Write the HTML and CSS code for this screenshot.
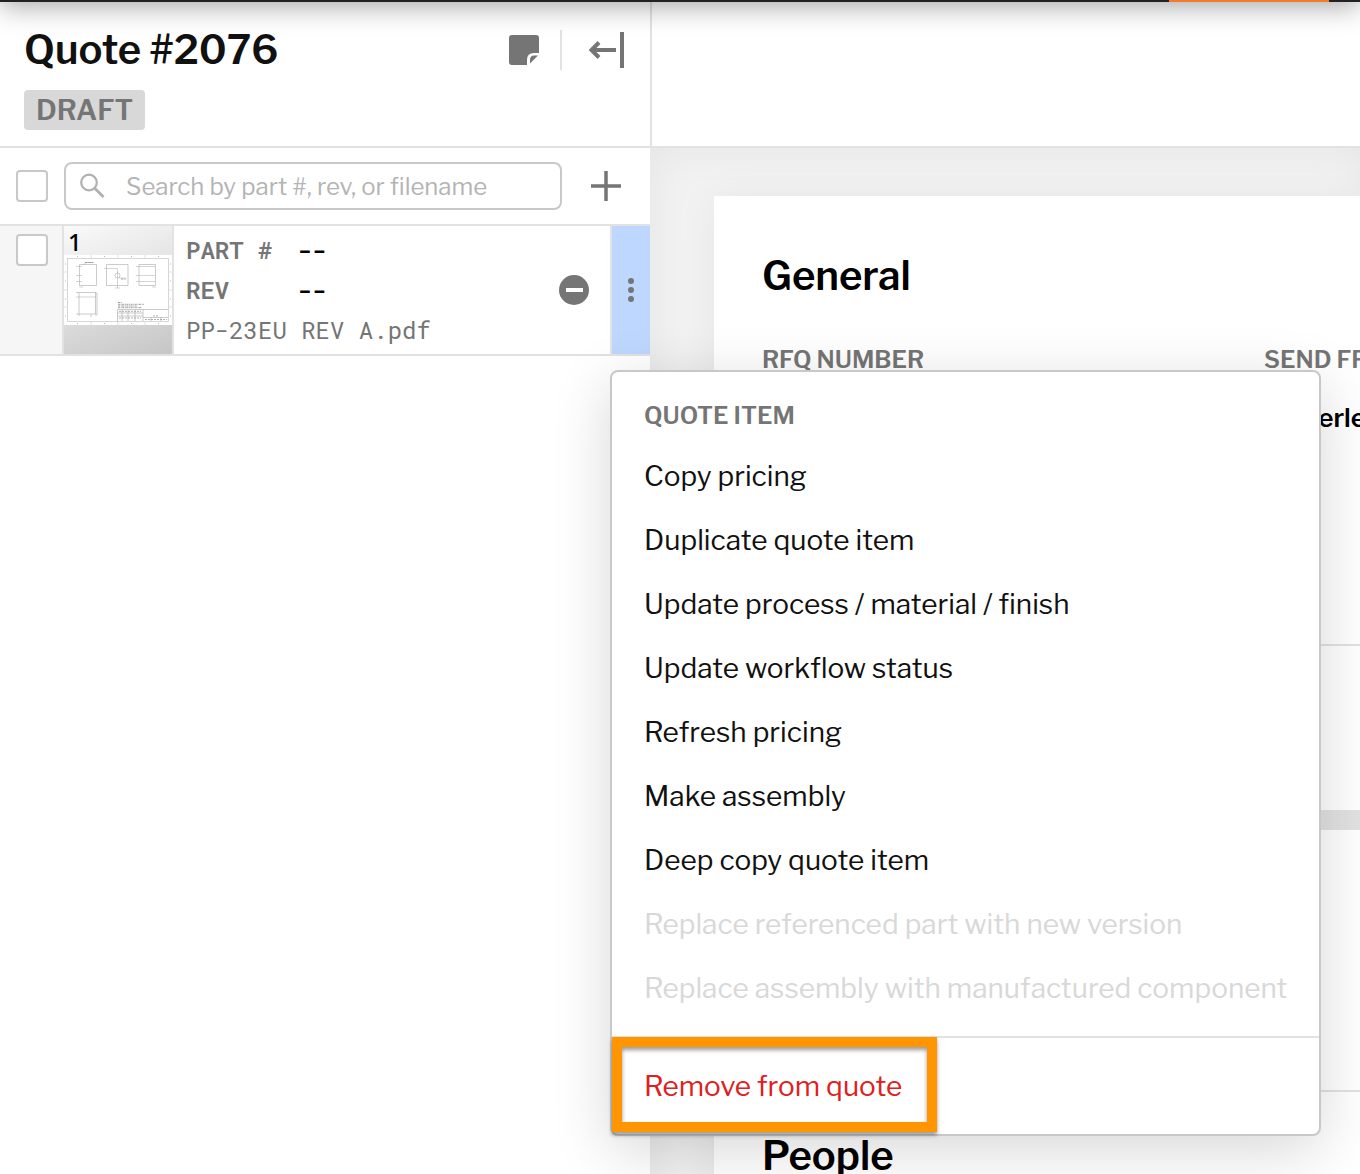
FILE: index.html
```html
<!DOCTYPE html>
<html lang="en">
<head>
<meta charset="utf-8">
<title>Quote #2076</title>
<link rel="stylesheet" href="styles.css">
</head>
<body>
<nav class="topbar"><span class="topbar-active"></span></nav>
<div class="app">
  <aside class="sidebar">
    <header class="quote-header">
      <div class="title-row">
        <h1>Quote #2076</h1>
        <button class="icon-btn" aria-label="Notes">
          <svg width="30" height="30" viewBox="0 0 30 30"><path fill="#757575" d="M3 0H27Q30 0 30 3V18H25Q18 18 18 25V30H3Q0 30 0 27V3Q0 0 3 0Z"/><path fill="#757575" d="M29 20.500L21 28.500V25Q21 20.500 25 20.500Z"/></svg>
        </button>
        <span class="separator"></span>
        <button class="icon-btn" aria-label="Collapse panel">
          <svg width="36" height="36" viewBox="0 0 36 36" fill="none" stroke="#757575" stroke-width="4"><path d="M28 18H4M11 10.500L3.500 18L11 25.500M34 0V36"/></svg>
        </button>
      </div>
      <span class="badge">DRAFT</span>
    </header>
    <div class="search-row">
      <input type="checkbox" class="check" aria-label="Select all items">
      <label class="search">
        <svg width="26" height="26" viewBox="0 0 26 26" fill="none" stroke="#b0b0b0" stroke-width="2.200"><circle cx="9" cy="9.500" r="7.800"/><path stroke-width="2.800" d="M14.500 15L23.500 24"/></svg>
        <input type="text" placeholder="Search by part #, rev, or filename" aria-label="Search items">
      </label>
      <button class="icon-btn" aria-label="Add item">
        <svg width="30" height="30" viewBox="0 0 30 30" stroke="#757575" stroke-width="3.500"><path d="M15 0V30M0 15H30"/></svg>
      </button>
    </div>
    <div class="item">
      <div class="item-select"><input type="checkbox" class="check" aria-label="Select item 1"></div>
      <div class="thumb">
        <span class="thumb-number">1</span>
        <svg class="drawing" viewBox="0 0 108 70" fill="none" stroke="#aaa" stroke-width=".6">
          <rect width="108" height="70" fill="#fff" stroke="none"/>
          <rect x="3.500" y="3.500" width="101" height="63" stroke="#bbb"/>
          <path stroke="#ccc" d="M27 0V3M54 0V3M81 0V3M27 67V70M54 67V70M81 67V70M0 17H3M0 35H3M0 52H3M105 17H108M105 35H108M105 52H108"/>
          <path stroke="#888" stroke-dasharray="1 1" d="M13 1.500h2M40 1.500h2M67 1.500h2M94 1.500h2M13 68.500h2M40 68.500h2M67 68.500h2M94 68.500h2M1 9h1M1 26h1M1 44h1M1 61h1M106 9h1M106 26h1M106 44h1M106 61h1"/>
          <path d="M15.500 9.500H32.500V30.500H15.500ZM42.500 9.500H64V30.500H42.500ZM75 9.500H91.500V30.500H75ZM12 37.500H31.500V59H12M31 38H33V60H31M15 38V61M27 59V62"/>
          <path stroke="#aaa" stroke-width=".5" d="M12 11.500h6M12 20.500h6M12 26.500h6M72 11.500H91M72 20.500H91M72 26.500H91M40 13.500H53.500V33M51 33h5M15 32h4M88 32h4M19 10L22 7.500H30M12 42h20M55 23H62"/>
          <circle cx="53.500" cy="20.500" r="2.500"/>
          <path stroke="#888" stroke-width=".8" stroke-dasharray="2 .7 1 .5" d="M54 47.500h4M54 49.300H80M54 51H73M54 52.700H78M21 7.500h8M57 24h5"/>
          <path stroke="#aaa" d="M53.500 54.500H104M53.500 54.500V66.500M53.500 58H79M53.500 61H79M58 55V66M64 55V66M71 55V66M79 54V66M79 62.500H104M87 62V66M97 62V66"/>
          <path stroke="#999" stroke-width=".8" stroke-dasharray="2 1" d="M55 56.300h22M55 63h22M81 64.500h22M89 61h6"/>
        </svg>
      </div>
      <dl class="item-info">
        <div><dt>PART #</dt><dd>--</dd></div>
        <div><dt>REV</dt><dd>--</dd></div>
        <div class="filename">PP-23EU REV A.pdf</div>
      </dl>
      <button class="icon-btn status" aria-label="No status">
        <svg width="30" height="30" viewBox="0 0 30 30"><circle cx="15" cy="15" r="15" fill="#757575"/><path fill="#fff" d="M7 13H24V17H7Z"/></svg>
      </button>
      <div class="more">
        <button class="more-btn" aria-label="Item actions">
          <svg width="6" height="24" viewBox="0 0 6 24" fill="#757575"><circle cx="3" cy="3" r="3"/><circle cx="3" cy="12" r="3"/><circle cx="3" cy="21" r="3"/></svg>
        </button>
        <div class="menu">
          <div class="menu-group">
            <h3>QUOTE ITEM</h3>
            <button>Copy pricing</button>
            <button>Duplicate quote item</button>
            <button>Update process / material / finish</button>
            <button>Update workflow status</button>
            <button>Refresh pricing</button>
            <button>Make assembly</button>
            <button>Deep copy quote item</button>
            <button disabled>Replace referenced part with new version</button>
            <button disabled>Replace assembly with manufactured component</button>
          </div>
          <div class="menu-group danger">
            <button>Remove from quote</button>
            <span class="highlight"></span>
          </div>
        </div>
      </div>
    </div>
  </aside>
  <main class="main">
    <div class="main-header"></div>
    <div class="canvas">
      <div class="sheet">
        <section class="general">
          <h2>General</h2>
          <div class="fields">
            <div class="field"><h4>RFQ NUMBER</h4></div>
            <div class="field"><h4>SEND FROM</h4><p>Waverley</p></div>
          </div>
        </section>
        <section class="summary"></section>
        <section class="details"></section>
        <section class="people"><h2>People</h2></section>
      </div>
    </div>
  </main>
</div>
</body>
</html>
```
FILE: styles.css
```css
* { box-sizing: border-box; }

body {
  margin: 0;
  min-height: 100vh;
  display: flex;
  flex-direction: column;
  overflow: hidden;
  background: #fff;
  color: #111;
  font-family: "Libre Franklin", Inter, "Liberation Sans", sans-serif;
}

h1, h2, h3, h4, p, dl, dd { margin: 0; }

button {
  border: 0;
  padding: 0;
  background: none;
  color: inherit;
  font: inherit;
  text-align: left;
}

svg { display: block; }

.topbar {
  position: relative;
  z-index: 3;
  height: 2px;
  padding-right: 31px;
  display: flex;
  justify-content: flex-end;
  background: #222;
}
/* shadow of the full-height bar, most of which is scrolled out of view */
.topbar::after {
  content: "";
  position: absolute;
  right: 0;
  bottom: 0;
  left: 0;
  height: 60px;
  box-shadow: 0 4px 28px rgba(0, 0, 0, .36);
  pointer-events: none;
}
.topbar-active { width: 160px; background: #f47a2c; }

.app { flex: 1; display: flex; height: calc(100vh - 2px); }

.sidebar {
  position: relative;
  z-index: 2;
  flex: none;
  width: 650px;
  background: #fff;
}

.quote-header {
  height: 146px;
  padding: 22px 26px 0 24px;
  border-bottom: 2px solid #e2e2e2;
}
.title-row { display: flex; align-items: center; gap: 21px; height: 52px; }
h1 { flex: 1; font-size: 40px; font-weight: 600; line-height: 52px; }
.separator { width: 2px; height: 40px; background: #e2e2e2; }
.title-row .icon-btn:last-child { margin-left: 5px; }
.badge {
  display: inline-block;
  margin-top: 14px;
  padding: 0 12px;
  border-radius: 4px;
  background: #d8d8d8;
  color: #757575;
  font-size: 28px;
  font-weight: 600;
  line-height: 40px;
}

.search-row {
  display: flex;
  align-items: center;
  gap: 16px;
  height: 78px;
  padding: 0 29px 0 16px;
  border-bottom: 2px solid #e2e2e2;
}
.search-row .icon-btn { margin-left: 13px; }
.check {
  appearance: none;
  flex: none;
  width: 32px;
  height: 32px;
  margin: 0;
  border: 2px solid #c8c8c8;
  border-radius: 4px;
  background: #fff;
}
.search {
  flex: 1;
  display: flex;
  align-items: center;
  gap: 20px;
  height: 48px;
  padding: 0 14px;
  border: 2px solid #c8c8c8;
  border-radius: 8px;
}
.search input {
  flex: 1;
  min-width: 0;
  padding: 2px 0 0;
  border: 0;
  outline: 0;
  font: 400 24px/32px "Libre Franklin", Inter, "Liberation Sans", sans-serif;
}
.search input::placeholder { color: #b4b4b4; }

.item { display: flex; height: 130px; border-bottom: 2px solid #e2e2e2; }
.item-select {
  width: 64px;
  padding: 8px 16px;
  border-right: 2px solid #e2e2e2;
  background: #f6f6f6;
}
.thumb {
  width: 110px;
  border-right: 2px solid #e2e2e2;
  background: linear-gradient(160deg, #fafafa, #c6c6c6);
}
.thumb-number {
  display: block;
  height: 29px;
  padding-left: 4px;
  color: #000;
  font: 500 24px/32px "Noto Sans", sans-serif;
}
.drawing { width: 100%; height: 70px; }

.item-info {
  flex: 1;
  padding: 4px 12px;
  color: #757575;
  font: 24px/40px "Roboto Mono", "Liberation Mono", monospace;
}
.item-info div { display: flex; }
.item-info dt { width: 111px; font-weight: 600; }
.item-info dd { color: #000; font-weight: 600; }
.status { align-self: center; margin-right: 21px; }

.more { position: relative; width: 40px; border-left: 2px solid #e2e2e2; }
.more-btn {
  display: flex;
  align-items: center;
  justify-content: center;
  width: 100%;
  height: 100%;
  background: #bdd7ff;
}

.menu {
  position: absolute;
  top: 144px;
  left: -2px;
  width: 711px;
  border: 2px solid #c8c8c8;
  border-radius: 8px;
  background: #fff;
  box-shadow: 0 14px 60px rgba(0, 0, 0, .16);
}
.menu-group { padding: 16px 0; }
.menu h3 {
  height: 56px;
  padding: 0 32px;
  color: #757575;
  font-size: 24px;
  font-weight: 600;
  line-height: 56px;
}
.menu button {
  display: block;
  width: 100%;
  padding: 0 32px;
  font-size: 28px;
  font-weight: 400;
  line-height: 64px;
  white-space: nowrap;
}
.menu button:disabled { color: #d8d8d8; }
.menu .danger { position: relative; border-top: 2px solid #e2e2e2; }
.menu .danger button { color: #e02020; }
.highlight {
  position: absolute;
  top: -1px;
  left: 0;
  width: 325px;
  height: 95px;
  border: 10px solid #ff9500;
  box-shadow: 0 3px 4px rgba(0, 0, 0, .4), inset 0 3px 4px rgba(0, 0, 0, .4);
}

.main { flex: 1; min-width: 0; overflow: hidden; }
.main-header {
  height: 146px;
  border-bottom: 2px solid #e2e2e2;
  border-left: 2px solid #e2e2e2;
}
.canvas {
  padding: 48px 0 0 64px;
  background: #f2f2f2;
  box-shadow: inset 4px 4px 40px rgba(0, 0, 0, .05);
}
.sheet {
  background: #fff;
  color: #000;
  box-shadow: 0 0 40px rgba(0, 0, 0, .05);
}
.sheet h2 { font-size: 40px; font-weight: 600; line-height: 48px; }
.general { height: 450px; padding: 56px 48px; border-bottom: 2px solid #e2e2e2; }
.fields { display: flex; margin-top: 44px; }
.field { flex: none; width: 502px; }
.field h4 { color: #757575; font-size: 24px; font-weight: 600; line-height: 32px; }
.field p { margin-top: 26px; font-size: 26px; font-weight: 600; line-height: 32px; }
.summary { height: 164px; }
.details { height: 282px; border-top: 20px solid #e2e2e2; border-bottom: 2px solid #e2e2e2; }
.people { padding: 40px 48px; }
```
